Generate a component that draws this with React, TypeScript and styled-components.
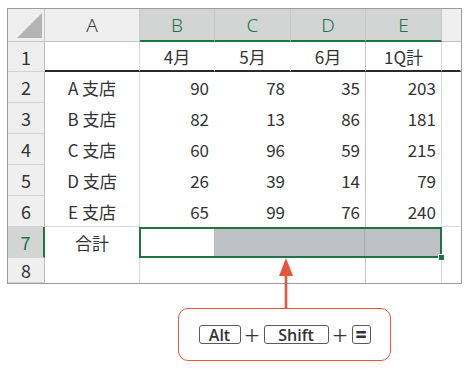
import React from "react";
import styled, { createGlobalStyle } from "styled-components";

const GREEN = "#217346";
const RED = "#e4573d";

const GlobalStyle = createGlobalStyle`
  html, body {
    margin: 0;
    background: #fff;
  }
  body {
    font-family: "Noto Sans CJK JP", "Noto Sans", sans-serif;
    color: #333;
  }
`;

const Page = styled.div`
  width: 470px;
  height: 374px;
  box-sizing: border-box;
  padding: 8px 0 0 7px;
  display: flex;
  flex-direction: column;
`;

const Sheet = styled.div`
  display: grid;
  grid-template-columns: 37px 95px 75px 76px 75px 76px 19px;
  grid-template-rows: 33px 30px repeat(6, 31px) 25px;
  width: 455px;
  box-sizing: border-box;
  border: 1px solid #9c9c9c;
  font-size: 17px;
`;

const Corner = styled.div`
  box-sizing: border-box;
  background: #efefef;
  border-right: 1px solid #c4c4c4;
  border-bottom: 1px solid #c4c4c4;
  display: flex;
  align-items: flex-end;
  justify-content: flex-end;
  padding: 0 2px 3px 0;
`;

const ColHead = styled.div<{ $selected?: boolean; $last?: boolean }>`
  box-sizing: border-box;
  display: flex;
  align-items: center;
  justify-content: center;
  font-family: "Noto Sans", sans-serif;
  font-weight: 300;
  font-size: 19px;
  background: ${(p) => (p.$selected ? "#d3d5d5" : "#efefef")};
  color: ${(p) => (p.$selected ? GREEN : "#333")};
  border-right: ${(p) => (p.$last ? "none" : "1px solid #c8c8c8")};
  border-bottom: ${(p) => (p.$selected ? `2px solid ${GREEN}` : "1px solid #c4c4c4")};
`;

const RowHead = styled.div<{ $selected?: boolean }>`
  box-sizing: border-box;
  display: flex;
  align-items: center;
  justify-content: center;
  font-size: 18px;
  background: ${(p) => (p.$selected ? "#d3d5d5" : "#efefef")};
  color: ${(p) => (p.$selected ? GREEN : "#333")};
  border-right: ${(p) => (p.$selected ? `2px solid ${GREEN}` : "1px solid #bdbdbd")};
  border-bottom: 1px solid #d2d2d2;
`;

type Line = "none" | "light" | "mid";
type Under = "none" | "thin" | "thick";

const lineColor: Record<Line, string> = {
  none: "transparent",
  light: "#dadada",
  mid: "#c2c2c2",
};

const Cell = styled.div<{ $align?: "center" | "right"; $right?: Line; $under?: Under }>`
  box-sizing: border-box;
  display: flex;
  align-items: center;
  justify-content: ${(p) => (p.$align === "right" ? "flex-end" : "center")};
  padding: 0 5px;
  white-space: pre;
  border-right: 1px solid ${(p) => lineColor[p.$right ?? "none"]};
  border-bottom: ${(p) =>
    p.$under === "thick" ? "2px solid #2a2a2a" : p.$under === "thin" ? "1px solid #dcdcdc" : "none"};
`;

const Selection = styled.div`
  grid-column: 3 / 7;
  position: relative;
  display: flex;
  border: 2px solid ${GREEN};
  margin-left: -1px;
`;

const SelPart = styled.div<{ $w?: number; $active?: boolean; $divider?: boolean }>`
  box-sizing: border-box;
  flex: ${(p) => (p.$w ? `0 0 ${p.$w}px` : "1")};
  background: ${(p) => (p.$active ? "#fff" : "#bdc1c3")};
  border-right: ${(p) => (p.$divider ? "1px solid #a9adaf" : "none")};
`;

const FillHandle = styled.span`
  position: absolute;
  right: -5px;
  bottom: -5px;
  width: 5px;
  height: 5px;
  background: ${GREEN};
  border: 1px solid #fff;
`;

const Callout = styled.div`
  margin-left: 171px;
  width: 213px;
  display: flex;
  flex-direction: column;
  align-items: center;
`;

const Pointer = styled.svg`
  display: block;
  position: relative;
  z-index: 1;
  margin: -26px 0 0 3px;
`;

const KeyBox = styled.div`
  box-sizing: border-box;
  width: 213px;
  height: 53px;
  border: 1.5px solid ${RED};
  border-radius: 10px;
  display: flex;
  align-items: center;
  justify-content: center;
  gap: 1px;
`;

const Key = styled.span<{ $w: number; $big?: boolean }>`
  box-sizing: border-box;
  width: ${(p) => p.$w}px;
  height: 19px;
  border: 1px solid #5a5a5a;
  border-radius: 3px;
  display: inline-flex;
  align-items: center;
  justify-content: center;
  font-family: "Open Sans", "Noto Sans", sans-serif;
  font-weight: ${(p) => (p.$big ? 800 : 600)};
  font-size: ${(p) => (p.$big ? 19 : 16)}px;
  line-height: 1;
  color: #333;
`;

const Plus = styled.span`
  width: 21px;
  text-align: center;
  font-family: "Noto Sans", sans-serif;
  font-weight: 300;
  font-size: 27px;
  line-height: 1;
  color: #333;
`;

const cols = ["A", "B", "C", "D", "E"];
const rightLines: Line[] = ["light", "none", "none", "mid", "light", "none"];

const branches: [string, number[]][] = [
  ["A 支店", [90, 78, 35, 203]],
  ["B 支店", [82, 13, 86, 181]],
  ["C 支店", [60, 96, 59, 215]],
  ["D 支店", [26, 39, 14, 79]],
  ["E 支店", [65, 99, 76, 240]],
];

const App = () => {
  return (
    <Page>
      <GlobalStyle />
      <Sheet>
        <Corner>
          <svg width="25" height="25" viewBox="0 0 25 25">
            <polygon points="25,0 25,25 0,25" fill="#b4b4b4" />
          </svg>
        </Corner>
        {cols.map((c, i) => (
          <ColHead key={c} $selected={i > 0}>
            {c}
          </ColHead>
        ))}
        <ColHead $last />

        <RowHead>1</RowHead>
        {["", "4月", "5月", "6月", "1Q計", ""].map((t, i) => (
          <Cell key={i} $right={rightLines[i]} $under="thick">
            {t}
          </Cell>
        ))}

        {branches.map(([name, nums], r) => (
          <React.Fragment key={name}>
            <RowHead>{r + 2}</RowHead>
            <Cell $right="light" $under={r === 4 ? "thin" : "none"}>
              {name}
            </Cell>
            {nums.map((n, i) => (
              <Cell key={i} $align="right" $right={rightLines[i + 1]}>
                {n}
              </Cell>
            ))}
            <Cell $under={r === 4 ? "thin" : "none"} />
          </React.Fragment>
        ))}

        <RowHead $selected>7</RowHead>
        <Cell $right="light">合計</Cell>
        <Selection>
          <SelPart $w={73} $active />
          <SelPart $w={76} />
          <SelPart $w={75} $divider />
          <SelPart />
          <FillHandle />
        </Selection>
        <Cell />

        <RowHead>8</RowHead>
        <Cell $right="light" />
        <Cell />
        <Cell />
        <Cell $right="mid" />
        <Cell $right="light" />
        <Cell />
      </Sheet>

      <Callout>
        <Pointer width="20" height="50" viewBox="0 0 20 50">
          <polygon points="10,0 3,18 17,18" fill={RED} />
          <line x1="10" y1="16" x2="10" y2="50" stroke={RED} strokeWidth="2.6" />
        </Pointer>
        <KeyBox>
          <Key $w={42}>Alt</Key>
          <Plus>+</Plus>
          <Key $w={65}>Shift</Key>
          <Plus>+</Plus>
          <Key $w={19} $big>
            =
          </Key>
        </KeyBox>
      </Callout>
    </Page>
  );
};

export default App;
